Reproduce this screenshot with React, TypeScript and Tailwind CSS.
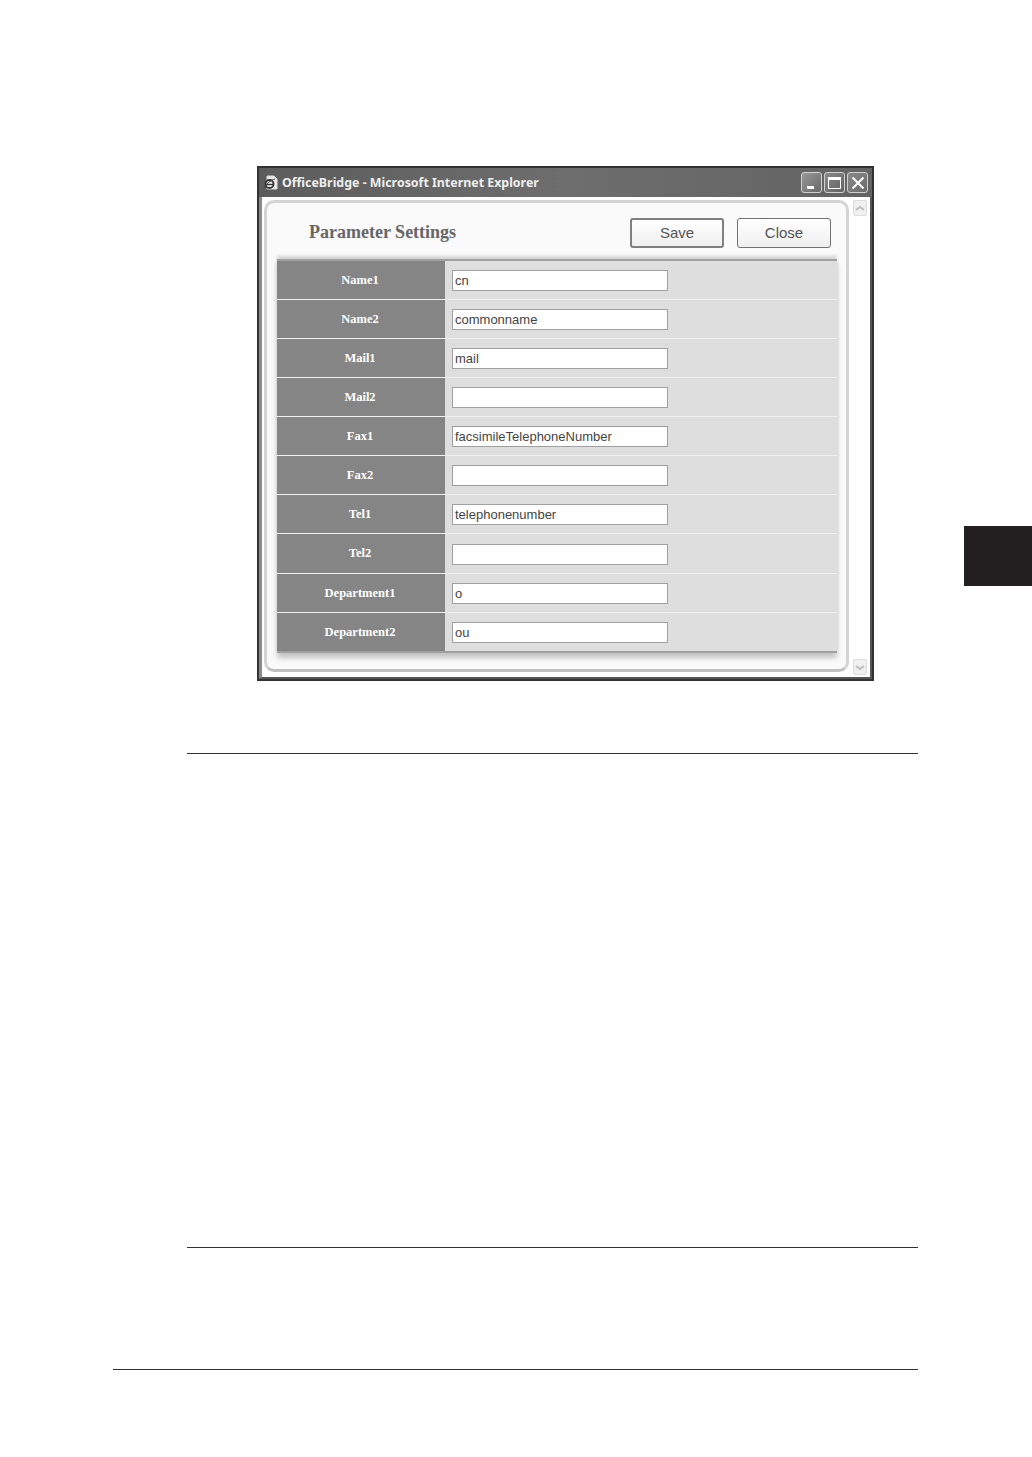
const rows = [
  { label: 'Name1', value: 'cn' },
  { label: 'Name2', value: 'commonname' },
  { label: 'Mail1', value: 'mail' },
  { label: 'Mail2', value: '' },
  { label: 'Fax1', value: 'facsimileTelephoneNumber' },
  { label: 'Fax2', value: '' },
  { label: 'Tel1', value: 'telephonenumber' },
  { label: 'Tel2', value: '' },
  { label: 'Department1', value: 'o' },
  { label: 'Department2', value: 'ou' },
]

function IeIcon() {
  return (
    <svg width="15" height="16" viewBox="0 0 15 16" className="shrink-0">
      <path d="M4 1h7l3 3v10H4z" fill="#e8e8e8" stroke="#ddd" strokeWidth="1" />
      <circle cx="6.5" cy="9" r="4" fill="#e8e8e8" stroke="#333" strokeWidth="1.8" />
      <path d="M2.5 9.5h8" stroke="#333" strokeWidth="1.3" />
      <path d="M0.5 13C3 9 8 5 12 4" fill="none" stroke="#444" strokeWidth="1" />
    </svg>
  )
}

function WindowButtons() {
  return (
    <div className="flex items-center gap-[2px]">
      <div className="flex h-[21px] w-[21px] items-end rounded-[3px] border border-[#d0d0d0] bg-gradient-to-br from-[#9a9a9a] to-[#686868] pb-[3px] pl-[5px]">
        <div className="h-[3px] w-[7px] bg-white" />
      </div>
      <div className="flex h-[21px] w-[21px] items-center justify-center rounded-[3px] border border-[#d0d0d0] bg-gradient-to-br from-[#8a8a8a] to-[#626262]">
        <div className="h-[12px] w-[13px] border border-t-[3px] border-white" />
      </div>
      <div className="flex h-[21px] w-[21px] items-center justify-center rounded-[3px] border border-[#d0d0d0] bg-gradient-to-br from-[#8a8a8a] to-[#6a6a6a]">
        <svg width="14" height="14" viewBox="0 0 14 14">
          <path d="M1.5 1.5l11 11M12.5 1.5l-11 11" stroke="#fff" strokeWidth="2" />
        </svg>
      </div>
    </div>
  )
}

function Scrollbar() {
  return (
    <div className="flex w-[18px] flex-col justify-between pb-[2px] pl-[4px]">
      {['M2 7l4-3 4 3', 'M2 4l4 3 4-3'].map((d) => (
        <div key={d} className="flex h-[16px] w-[14px] items-center justify-center rounded-[2px] border border-[#dcdcdc] bg-[#f0f0f0]">
          <svg width="12" height="11" viewBox="0 0 12 11">
            <path d={d} fill="none" stroke="#bdbdbd" strokeWidth="2" />
          </svg>
        </div>
      ))}
    </div>
  )
}

function ActionButton({ label, primary }: { label: string; primary?: boolean }) {
  return (
    <button
      className={`h-[30px] w-[94px] rounded-[3px] bg-gradient-to-b from-white to-[#efefef] text-[15px] text-[#555] font-['Liberation_Sans',sans-serif] ${
        primary ? 'border-2 border-[#808080]' : 'border border-[#707070]'
      }`}
    >
      {label}
    </button>
  )
}

function SettingsWindow() {
  return (
    <div className="flex h-[515px] w-[617px] flex-col border-2 border-[#333] bg-white">
      {/* Title bar */}
      <div className="flex h-[29px] shrink-0 items-center justify-between bg-gradient-to-r from-[#5c5c5c] via-[#6e6e6e] to-[#636363] pl-[4px] pr-[4px]">
        <div className="flex items-center gap-[4px] pt-[2px]">
          <IeIcon />
          <span className="text-[12.4px] font-bold text-[#eeeeee] font-['Noto_Sans',sans-serif]">
            OfficeBridge - Microsoft Internet Explorer
          </span>
        </div>
        <WindowButtons />
      </div>

      {/* Page area */}
      <div className="flex min-h-0 flex-1 border-b-2 border-l-[3px] border-r-2 border-b-[#555] border-l-[#8a8a8a] border-r-[#555] bg-white pl-[2px] pt-[3px]">
        <div className="flex h-[472px] w-[585px] flex-col rounded-[10px] border-[3px] border-[#d4d4d4] border-b-[#c0c0c0] bg-[#fafafa]">
          <div className="flex h-[56px] shrink-0 items-center pl-[42px] pr-[15px] pt-[4px]">
            <h1 className="flex-1 pb-[2px] text-[18px] font-bold text-[#666] font-['Liberation_Serif',serif]">Parameter Settings</h1>
            <div className="flex gap-[13px]">
              <ActionButton label="Save" primary />
              <ActionButton label="Close" />
            </div>
          </div>

          <div className="mx-[10px] mr-[9px] border-y border-b-2 border-y-[#a0a0a0] shadow-[0_-3px_3px_#d4d4d4,0_5px_5px_#c4c4c4]">
            {rows.map((row, i) => (
              <div
                key={row.label}
                className={`flex border-t ${i > 0 ? 'border-[#f0f0f0]' : 'border-[#a0a0a0]'} ${i === 7 ? 'h-[40px]' : 'h-[39px]'}`}
              >
                <div className="flex w-[168px] shrink-0 items-center justify-center bg-[#858585] pr-[2px] text-[12.5px] font-bold text-white font-['Liberation_Serif',serif]">
                  {row.label}
                </div>
                <div className="flex flex-1 items-center bg-[#dedede] pl-[7px] pt-[1px]">
                  <input
                    readOnly
                    value={row.value}
                    className="h-[21px] w-[216px] border border-[#a0a0a0] bg-white px-[2px] text-[13px] text-[#444] outline-none font-['Liberation_Sans',sans-serif]"
                  />
                </div>
              </div>
            ))}
          </div>
        </div>
        <Scrollbar />
      </div>
    </div>
  )
}

export default function App() {
  return (
    <div className="relative h-[1457px] w-[1032px] bg-white pt-[166px]">
      <div className="pl-[257px]">
        <SettingsWindow />
      </div>

      <div className="mt-[72px] ml-[187px] h-[495px] w-[731px] border-y border-[#333]" />
      <div className="mt-[121px] ml-[113px] w-[805px] border-t border-[#333]" />

      {/* Chapter tab on the page edge */}
      <div className="absolute right-0 top-[526px] h-[60px] w-[68px] bg-[#231f20]" />
    </div>
  )
}
